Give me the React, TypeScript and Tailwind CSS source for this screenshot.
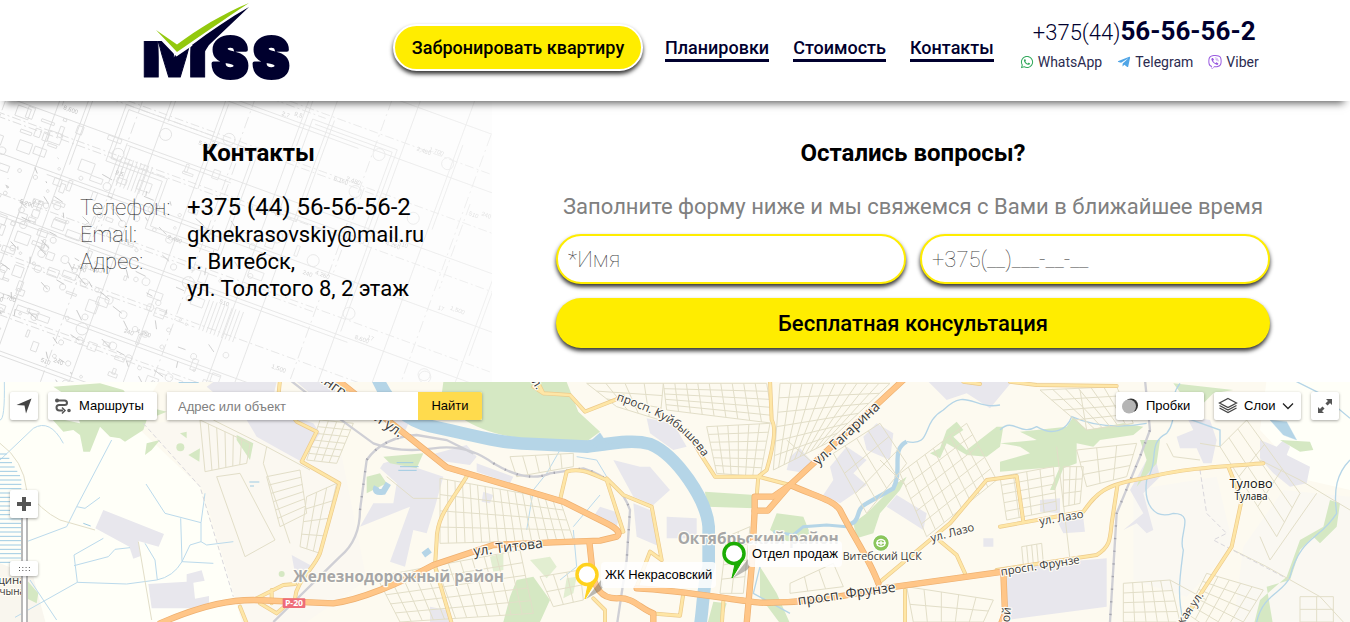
import React from "react";
import { FaWhatsapp, FaTelegramPlane, FaViber } from "react-icons/fa";

type Pt = [number, number];

const lerp = (p: Pt, q: Pt, t: number): Pt => [p[0] + (q[0] - p[0]) * t, p[1] + (q[1] - p[1]) * t];

/* Path of a street grid stretched between four corners. */
function grid(a: Pt, b: Pt, c: Pt, d: Pt, cols: number, rows: number): string {
  const parts: string[] = [];
  for (let i = 0; i <= cols; i++) {
    const p = lerp(a, b, i / cols);
    const q = lerp(d, c, i / cols);
    parts.push(`M${p[0]} ${p[1]}L${q[0]} ${q[1]}`);
  }
  for (let j = 0; j <= rows; j++) {
    const p = lerp(a, d, j / rows);
    const q = lerp(b, c, j / rows);
    parts.push(`M${p[0]} ${p[1]}L${q[0]} ${q[1]}`);
  }
  return parts.join("");
}

const streetGrids: string[] = [
  grid([600, 120], [750, 190], [740, 250], [615, 275], 6, 1),
  grid([650, 290], [720, 280], [825, 480], [735, 530], 1, 1),
  grid([800, 290], [900, 270], [920, 400], [840, 440], 1, 6),
  grid([960, 120], [1060, 130], [1010, 250], [920, 240], 4, 6),
  grid([920, 350], [1010, 310], [960, 520], [900, 500], 3, 4),
  grid([1320, 295], [1680, 360], [1720, 480], [1320, 490], 16, 4),
  grid([1130, 590], [1560, 510], [1600, 700], [1200, 726], 12, 5),
  grid([1620, 590], [1740, 570], [1750, 660], [1660, 680], 3, 2),
  grid([1530, 230], [1720, 220], [1720, 260], [1550, 290], 5, 1),
  grid([1990, 10], [2300, 10], [2320, 130], [2000, 90], 9, 5),
  grid([2120, 140], [2310, 130], [2280, 290], [2150, 280], 6, 6),
  grid([2340, 10], [2670, 10], [2480, 190], [2320, 270], 10, 6),
  grid([2500, 220], [2640, 130], [2720, 250], [2600, 400], 4, 3),
  grid([2700, 280], [2900, 130], [2990, 300], [2780, 470], 8, 5),
  grid([3000, 290], [3160, 260], [3170, 390], [3020, 420], 4, 5),
  grid([3190, 260], [3250, 260], [3240, 370], [3190, 380], 3, 3),
  grid([3230, 210], [3410, 190], [3380, 290], [3260, 320], 3, 3),
  grid([3120, 30], [3350, 20], [3400, 130], [3260, 150], 6, 4),
  grid([3660, 200], [3740, 120], [3900, 340], [3830, 470], 3, 3),
  grid([3370, 610], [3510, 600], [3540, 726], [3370, 726], 5, 4),
  grid([3620, 580], [3790, 630], [3690, 790], [3560, 700], 5, 5),
  grid([2370, 610], [2500, 550], [2530, 620], [2370, 640], 3, 1),
  grid([2720, 620], [2980, 660], [2950, 726], [2740, 726], 5, 2),
  grid([1760, 10], [1990, 10], [1980, 120], [1850, 80], 4, 3),
  grid([2180, 470], [2250, 440], [2230, 640], [2160, 640], 2, 4),
  grid([3900, 650], [4000, 650], [4000, 726], [3900, 726], 2, 2),
  grid([3065, 500], [3125, 490], [3130, 550], [3070, 555], 4, 1),
];

const orangeRoads = [
  "M480 730C620 670 700 660 760 660L1000 670C1080 660 1200 610 1300 555L1480 495L1660 487L1800 482L1850 470C1865 460 1850 445 1820 430L1690 365L1340 262L1150 110L1000 -10",
  "M1768 485L1776 560C1780 620 1800 655 1850 655C1900 650 1925 690 1960 700L1960 740",
  "M1910 625C2040 630 2200 660 2280 668C2400 670 2500 655 2650 625L3010 575L3015 700L3000 740",
  "M2710 0L2370 315L2320 350H2264V390L2255 560L2240 730",
  "M2264 392H2303L2370 315C2450 350 2500 360 2520 390C2560 470 2610 540 2635 610",
];

const yellowRoads = [
  "M840 0L835 50L890 125L950 155L905 245L1018 310L960 520C940 570 890 600 885 655",
  "M760 660L850 615L885 612M720 680L740 730M780 670L830 700L870 665M815 630V670",
  "M1400 290C1350 370 1310 410 1310 480L1305 560L1355 730",
  "M1610 0L1630 40L1710 45L1755 95L1870 50M1600 20L1630 40",
  "M1680 360L1700 275C1750 260 1790 290 1820 300L1870 455H1850M1820 295L1870 345L1955 380L1985 540L1950 515L1910 620",
  "M2310 0L2315 120Q2335 150 2300 270L2275 290L2270 350M2275 290H2145L2100 220L2060 150M2275 290L2370 315",
  "M2635 610L2850 430L2960 300L3050 288L3070 425M2810 475L2870 525L2895 580M3000 440L3250 395C3290 340 3310 315 3430 295C3550 265 3650 260 3790 250",
  "M2990 570L3290 525C3330 500 3330 480 3335 430L3352 318M3685 260L3725 360L3695 500L3590 660L3540 740",
  "M3030 5L3110 15L3350 18M1780 655L1815 690V740M1950 700L2040 707L2050 640M2165 740L2170 665M2715 630V740M2890 5L2940 12",
];

const riverPath = "M1130 -10C1160 60 1210 120 1290 138C1400 160 1500 192 1600 192L1760 200C1850 188 1900 178 1950 192C2030 225 2120 360 2126 440L2126 560C2108 620 2110 680 2100 740";

function Roads({ paths, casing, fill, width }: { paths: string[]; casing: string; fill: string; width: number }) {
  return (
    <g fill="none" strokeLinejoin="round" strokeLinecap="round">
      {paths.map((d) => (
        <path key={"c" + d} d={d} stroke={casing} strokeWidth={width + 4} />
      ))}
      {paths.map((d) => (
        <path key={d} d={d} stroke={fill} strokeWidth={width} />
      ))}
    </g>
  );
}

function MapCanvas() {
  return (
    <svg viewBox="0 6 4050 720" preserveAspectRatio="xMidYMid slice" className="absolute inset-0 h-full w-full" aria-hidden="true">
      <rect width="4050" height="740" fill="#fdfaf0" />
      <path d="M0 0H480L400 130L600 320L705 650L730 740H0Z" fill="#fffff8" />
      <path d="M600 120L1000 100L1100 600L900 740H730L700 640L610 330L430 130Z" fill="#fbf8f1" />
      <path d="M3400 330L3650 290L3700 500L3560 650L3400 600ZM3730 500L3850 330L4050 350V740H3700Z" fill="#faf8f2" />
      <path d="M3800 0H4050V330L3920 300L3780 150Z" fill="#fffff8" />
      <path d="M0 550L100 590L140 740H0Z" fill="#f9f6ee" />

      <g fill="#e8e7ed">
        <path d="M310 390L492 462L476 500L415 483L422 528L400 536L388 500L286 445Z" />
        <path d="M445 612L560 605V583L605 571L614 602L580 608L585 656L627 648V668L585 685H455Z" />
        <path d="M640 6H830L810 90L940 130L960 160L905 245L845 212L770 170L740 120L620 20ZM875 525L940 560L885 580Z" />
        <path d="M890 6H1010L1000 60L930 40ZM1160 120L1230 120L1210 165Z" />
        <path d="M1290 225L1400 195L1430 230L1410 255L1340 245ZM1430 250L1540 290L1530 310L1430 275ZM1150 250L1180 240L1330 290L1305 380L1280 460L1240 450L1215 560L1170 545L1230 380L1080 440L1120 370H1180L1190 310L1140 265Z" />
        <path d="M1840 240L1920 260L1950 260L2010 330L1960 375L1900 350ZM1900 370L1950 390L1980 500L1910 470ZM1800 380L1860 400L1850 440L1780 410ZM1290 680L1340 690L1350 740H1290ZM1450 335L1480 345L1470 370L1445 365Z" />
        <path d="M1940 115L2020 130L2060 200L2020 210L1950 160ZM2000 410L2090 415V475H2000Z" />
        <path d="M2490 260L2540 200L2600 240L2560 280L2600 315L2520 370L2470 345L2500 300ZM2590 170L2630 130L2680 160L2670 240L2600 210ZM2370 230L2400 205L2440 250L2420 280L2360 270ZM2690 345L2780 400L2770 450L2660 380Z" />
        <path d="M2780 0H3040L2970 85L2900 40L2840 60ZM2950 475H2980V500H2950ZM3120 360L3180 355V400L3120 395ZM3170 420L3250 415L3255 455L3190 460ZM3020 560L3320 535V680L3020 720ZM3390 330L3440 240L3470 250L3480 290L3430 340L3460 450L3440 460L3410 430L3370 450L3430 400Z" />
        <path d="M3530 170L3580 150L3560 110L3630 120L3650 180L3635 250H3610L3590 205H3540ZM3780 180L3830 200L3850 180L3870 200L3860 225L3930 260L3920 310L3870 320L3820 280L3780 235Z" />
      </g>

      <g fill="#d5e8c3">
        <path d="M1330 6H1700L1735 95L1800 155L1755 188L1600 178C1500 170 1440 150 1380 112L1320 80Z" />
        <path d="M2115 335L2265 345V385L2120 380ZM2330 400L2410 410L2430 460L2370 490L2310 450ZM1550 600L1600 590L1650 660L1620 726H1510L1530 650ZM2280 560L2330 640L2370 730H2340L2280 650ZM2140 665L2180 670L2160 740H2120Z" />
        <path d="M2560 430L2600 400L2690 310L2720 290L2700 330L2640 400L2620 460L2570 475ZM2790 220L2820 205L2840 150L2870 125L2890 150L2860 170L2900 210L2990 140L3010 140L3000 200L2960 230L2900 225L2840 190L2820 235Z" />
        <path d="M3000 190L3110 180L3060 155L3200 140L3220 110L3260 150L3370 130L3430 140L3400 165L3300 180L3280 200L3230 190L3230 250L3190 265L3165 330H3150L3180 260L3000 275V245L3090 220L3060 200Z" />
        <path d="M3420 180L3480 180L3470 250L3410 320L3440 240ZM3520 10L3700 30L3640 40L3570 110L3550 50ZM3840 180L3930 185L3940 210L3900 215ZM3990 360L4020 370L4010 440L3960 490L3940 470L3900 510L3870 600L3800 620L3820 740H3760L3780 660L3860 590L3900 480L3970 440Z" />
        <path d="M160 20L300 10L370 30L400 70L500 95L440 120L430 150L375 185L360 175L330 170L300 140L270 215H250L240 165L220 150L190 155L150 110L240 130L220 60ZM435 225L440 190L480 180L455 210ZM540 160L560 155L560 175ZM565 225L600 205L598 245ZM710 165L760 190L750 240L710 180ZM80 600L115 640L110 670L70 650ZM1150 230L1270 220L1250 265L1170 250ZM1100 290L1140 280L1160 310L1100 340Z" />
        <path d="M1700 595L1730 590L1720 640L1690 655ZM1470 530L1510 520V570L1480 575ZM1590 540L1650 530L1670 560L1640 595Z" opacity=".7" />
        <circle cx="541" cy="202" r="12" />
        <circle cx="845" cy="582" r="9" />
      </g>

      <g fill="none" stroke="#b5d5e7">
        <path d={riverPath} strokeWidth="38" />
        <path d="M1770 185L1800 158L1820 188L1900 195L1800 212Z" fill="#b5d5e7" strokeWidth="1" />
        <path d="M2540 435C2590 425 2560 390 2600 370L2680 325C2710 270 2670 210 2720 185" strokeWidth="13" />
        <path d="M2320 455L2380 465L2410 440L2480 435L2540 440" strokeWidth="9" />
        <path d="M2720 185C2800 200 2760 130 2830 90C2900 20 2920 90 3000 75M3000 150C3040 110 3060 170 3110 140C3160 170 3200 150 3215 110C3260 130 3330 150 3440 130M2280 560L2260 640L2370 700" strokeWidth="4" />
        <path d="M3540 10C3500 60 3540 110 3500 160C3440 190 3480 240 3440 300C3430 370 3460 420 3520 400C3590 400 3530 470 3550 510C3540 590 3530 640 3550 726M4050 240C4010 280 4000 330 4010 400C3960 480 3900 470 3870 590C3850 640 3790 640 3770 726M3880 0L3960 40L4050 115M3520 100L3660 150V200" strokeWidth="4" />
        <path d="M3810 120L3860 125L3890 180L3850 165Z" fill="#b5d5e7" />
        <path d="M1130 320Q1120 340 1150 335L1165 310M1270 525L1290 510" strokeWidth="18" />
      </g>
      <g fill="none" stroke="#bbdaec" strokeWidth="3">
        <path d="M0 240L100 145Q150 115 190 190M335 180L230 380L200 440L80 485M230 380L255 385L300 352M438 312L495 400L603 428L615 340M603 428V485L620 495L700 485M542 415L546 545L640 550M546 545Q520 590 470 600L380 612L232 607L222 525L310 475M232 607L45 712M222 557L325 530L345 508L390 503M435 490L465 540L472 600M90 600L170 720M546 545L570 495L603 485M0 120Q15 120 13 6M1680 210L1640 280L1600 330L1580 450M1800 345L1720 440M1720 450L1730 560L1680 600M1730 230L1790 240L1820 290" />
      </g>
      <g stroke="#9ecbe3" strokeWidth="3">
        {Array.from({ length: 26 }, (_, i) => (
          <path key={i} d={`M0 ${222 + i * 13}H${i < 6 ? 20 + i * 8 : 64}`} />
        ))}
        <path d="M1190 248H1240M1200 260H1256M1195 271H1250M250 430L272 438M748 306H778M750 318H762M536 7H596" />
      </g>

      <g fill="none" stroke="#e2dec8" strokeWidth="3">
        {streetGrids.map((d) => (
          <path key={d} d={d} />
        ))}
        <path d="M0 190Q70 240 80 330Q120 390 180 420L285 450M415 485L455 720M1160 290L1240 355L1320 355M640 120L800 200L930 270M800 200L790 250L870 490M3780 240L3900 300L4050 390M3700 510L3800 560L3960 650L4030 726M3510 600L3620 660M2640 240L2720 320M2360 180L2440 250M3240 30L3260 150M3170 200L3210 540M3600 190L3660 200M3500 190L3520 230L3600 240M3780 470L3810 540L3950 340" />
      </g>
      <g fill="none" stroke="#d9d7dc" strokeWidth="3" strokeDasharray="14 8">
        <path d="M430 130L600 320L700 650M3600 270L3620 400L3680 460L3640 480L3850 590" />
      </g>
      <g fill="none" stroke="#cfcfd5" strokeWidth="7">
        <path d="M870 0L1010 110L1120 190Q1200 220 1300 205Q1400 190 1480 250Q1580 310 1650 280L1750 265Q1860 300 1890 390L1880 540L1850 740M1020 530Q1080 480 1080 390L1100 240Q1150 170 1250 165L1340 180L1420 220M1020 530L820 726M3435 0L3450 150L3420 230L3350 400L3330 726" />
      </g>
      <g fill="none" stroke="#a5a5ae" strokeWidth="7" strokeDasharray="4 34">
        <path d="M1080 390L1100 240Q1150 170 1250 165M1480 250Q1580 310 1650 280L1750 265Q1860 300 1890 390L1880 540M3435 0L3450 150L3420 230L3350 400L3330 726" />
      </g>

      <Roads paths={yellowRoads} casing="#ecca8b" fill="#fee6a6" width={8} />
      <Roads paths={orangeRoads} casing="#eeb070" fill="#ffc688" width={15} />

      <defs>
        <path id="street-kuibysheva" d="M1848 60C1960 100 2040 130 2110 232" />
        <path id="street-long" d="M880 -52L1240 204" />
      </defs>
      <g fontFamily="'Open Sans', 'Noto Sans', sans-serif" fill="#3a3a3a" stroke="#fffdf5" strokeWidth="7" strokeLinejoin="round" paintOrder="stroke">
        <g fontWeight="700" fill="#a6a6a6" fontSize="46">
          <text x="880" y="606">Железнодорожный район</text>
          <text x="2033" y="492">Октябрьский район</text>
        </g>
        <text fontSize="42" transform="translate(1422 528) rotate(-7)">ул. Титова</text>
        <text fontSize="35"><textPath href="#street-kuibysheva">просп. Куйбышева</textPath></text>
        <text fontSize="42" transform="translate(2455 258) rotate(-43)">ул. Гагарина</text>
        <text fontSize="42" transform="translate(2395 676) rotate(-8)">просп. Фрунзе</text>
        <text fontSize="34" transform="translate(2795 486) rotate(-15)">ул. Лазо</text>
        <text fontSize="34" transform="translate(3120 436) rotate(-10)">ул. Лазо</text>
        <text fontSize="34" transform="translate(3004 587) rotate(-9)">просп. Фрунзе</text>
        <text fontSize="34" transform="translate(3540 748) rotate(-55)">ская ул.</text>
        <text fontSize="36" transform="translate(3026 746) rotate(-83)">кой</text>
        <text fontSize="43"><textPath href="#street-long">Ленинградская ул.</textPath></text>
        <text fontSize="36" transform="translate(1585 -10) rotate(58)">ул.</text>
        <text fontSize="32" x="2528" y="540">Витебский ЦСК</text>
        <g fill="#111" textAnchor="middle">
          <text fontSize="38" x="3753" y="325">Тулово</text>
          <text fontSize="30" x="3753" y="361">Тулава</text>
        </g>
        <text fontSize="34" x="-16" y="612">щина</text>
        <text fontSize="30" x="-16" y="646">счына</text>
      </g>
      <rect x="848" y="655" width="68" height="29" rx="3" fill="#ee6c79" />
      <text x="882" y="679" fontSize="26" fontWeight="700" textAnchor="middle" fill="#fff" fontFamily="'Open Sans', sans-serif">Р-20</text>
      <circle cx="2643" cy="489" r="25" fill="#8bc65c" stroke="#fff" strokeWidth="4" />
      <path d="M2632 483Q2643 474 2654 483V495Q2643 504 2632 495Z" fill="none" stroke="#fff" strokeWidth="4" />
      <path d="M2628 489H2658M2643 482V496" stroke="#fff" strokeWidth="4" />
    </svg>
  );
}

/* Repeatable scatter value in 0..1 for the small details of the plan. */
const scatter = (n: number) => {
  const s = Math.sin(n * 127.1 + 11.7) * 43758.5453;
  return s - Math.floor(s);
};

/* Faint architect's drawing behind the contact details. */
function Blueprint() {
  const marks = ["2,480", "510", "1,500", "2,7", "6.160", "4.260", "17", "5.200", "1.700", "240", "8,600", "9,5"];
  return (
    <svg viewBox="0 0 492 281" preserveAspectRatio="xMinYMin slice" className="absolute inset-y-0 left-0 h-full w-[492px]" aria-hidden="true">
      <defs>
        <linearGradient id="fade">
          <stop offset="0" stopColor="#fff" />
          <stop offset="1" stopColor="#fff" stopOpacity=".4" />
        </linearGradient>
        <mask id="fade-mask"><rect width="492" height="281" fill="url(#fade)" /></mask>
      </defs>
      <rect width="492" height="281" fill="#fdfdfd" />
      <g mask="url(#fade-mask)">
        <g transform="rotate(20)" fill="none" stroke="#d9d9d9" strokeWidth=".8">
          {Array.from({ length: 15 }, (_, i) => {
            const y = -175 + i * 31 + (i % 3) * 7;
            return <path key={i} d={`M0 ${y}H560M${(i * 67) % 200} ${y + 4}H${230 + ((i * 41) % 190)}`} strokeDasharray={i % 2 === 0 ? "9 3 2 3" : undefined} />;
          })}
          {Array.from({ length: 14 }, (_, i) => {
            const x = 5 + i * 39 + (i % 2) * 12;
            return <path key={i} d={`M${x} -180V280M${x + 4} ${-160 + ((i * 53) % 180)}v90`} strokeDasharray={i % 3 === 0 ? "12 4 2 4" : undefined} />;
          })}
          {Array.from({ length: 130 }, (_, i) => (
            <rect key={i} x={scatter(i) * scatter(i + 900) * 420} y={scatter(i + 200) * 260 - 10} width={2 + scatter(i + 400) * 13} height={2 + scatter(i + 600) * 10} />
          ))}
          {Array.from({ length: 110 }, (_, i) => (
            <circle key={i} cx={scatter(i + 50) * 300} cy={40 + scatter(i + 250) * 210} r={1 + scatter(i + 450) * 3} />
          ))}
          {Array.from({ length: 90 }, (_, i) => (
            <path key={i} d={`M${scatter(i + 70) * 280} ${30 + scatter(i + 270) * 220}l${scatter(i + 470) * 12} ${scatter(i + 670) * 8}`} stroke="#bdbdbd" />
          ))}
          {Array.from({ length: 16 }, (_, i) => (
            <circle key={i} cx={scatter(i + 5) * 500} cy={scatter(i + 25) * 330 - 140} r="6" />
          ))}
          {Array.from({ length: 10 }, (_, i) => (
            <path key={i} d={`M${130 + i * 4} 10v30M${265 + i * 4} 115v32`} />
          ))}
          <path d="M120 -40H260V70H180V20H120ZM124 -36H256V66H184V16H124ZM300 -90H390V10H300ZM304 -86H386V6H304" />
          <g fill="#bdbdbd" stroke="none" fontSize="6" fontFamily="'Liberation Sans', sans-serif">
            {Array.from({ length: 50 }, (_, i) => (
              <text key={i} x={(i * 71) % 500} y={((i * 43) % 400) - 160}>{marks[i % marks.length]}</text>
            ))}
          </g>
        </g>
      </g>
    </svg>
  );
}

function Logo() {
  return (
    <svg viewBox="0 0 156 80" className="h-20 w-[156px] shrink-0" role="img" aria-label="MSS">
      <defs>
        <clipPath id="logo-band"><rect y="41" width="156" height="39" /></clipPath>
      </defs>
      <g fill="#00002e" stroke="#00002e" strokeLinejoin="round" fontFamily="Inter, 'Liberation Sans', sans-serif" fontWeight="900">
        <text x="-1" y="77" fontSize="70" strokeWidth="1" clipPath="url(#logo-band)">M</text>
        <g fontSize="54" strokeWidth="4">
          <text x="70" y="77">S</text>
          <text x="111" y="77">S</text>
        </g>
      </g>
      <path d="M14 30L35 44.500C56 29 80 14 107 3C84 18 58 36 35 52Z" fill="#93c90e" stroke="#fff" strokeWidth="7" paintOrder="stroke" />
      <path d="M50 45C68 31 88 18 107 7L67 45L60 56Z" fill="#00002e" />
    </svg>
  );
}

function Pin({ color }: { color: string }) {
  return (
    <svg viewBox="0 0 30 38" className="h-[38px] w-[30px] shrink-0" aria-hidden="true">
      <path d="M11 37L26 18Q31 23 25 29Z" fill="#555" opacity=".4" />
      <path d="M22 17L10 37L13 23Z" fill={color} stroke={color} strokeWidth="1" />
      <circle cx="12" cy="12.500" r="10" fill="#fff" stroke={color} strokeWidth="3.500" />
    </svg>
  );
}

const tool = "flex h-7 items-center rounded-xs bg-white text-[13px] text-black shadow-[0_1px_3px_rgba(0,0,0,0.35)]";

const links = ["Планировки", "Стоимость", "Контакты"];

const raised = "shadow-[0_3px_4px_#333]";

const field = "h-[50px] min-w-0 flex-1 rounded-full border-2 border-[#ffed00] bg-white px-2.5 text-[22px] font-thin placeholder:text-[#444]";

export default function App() {
  return (
    <div className="flex min-h-screen flex-col bg-white font-[Roboto,'Noto_Sans',sans-serif] text-black">
      <header className="relative z-10 h-[101px] bg-white px-4 text-[#00002e] shadow-[0_8px_8px_-6px_rgba(0,0,0,0.65)]">
        <div className="flex items-start pl-[126px]">
          <a href="#" className="shrink-0"><Logo /></a>
          <button type="button" className={`mt-6 ml-[95px] h-[47px] w-[250px] shrink-0 rounded-full border-2 border-white bg-[#ffed00] text-[18px] font-medium text-black ${raised}`}>
            Забронировать квартиру
          </button>
          <nav className="mt-9 ml-[22px] flex shrink-0 gap-6">
            {links.map((l) => (
              <a key={l} href="#" className="border-b-3 border-[#00002e] text-[18px] leading-[23px] font-medium">{l}</a>
            ))}
          </nav>
          <div className="mt-4 ml-[26px] flex shrink-0 flex-col items-center">
            <a href="tel:+375445656562" className="pl-2.5 text-[22px] leading-[30px] font-light">
              +375(44)<b className="text-[26px] font-bold">56-56-56-2</b>
            </a>
            <div className="mt-1 flex gap-[15px] text-[14px] leading-5 text-[#2b2b50]">
              <a href="#" className="flex items-center gap-1"><FaWhatsapp className="text-[#32a95c]" />WhatsApp</a>
              <a href="#" className="flex items-center gap-1"><FaTelegramPlane className="text-[#50a5e6]" />Telegram</a>
              <a href="#" className="flex items-center gap-1"><FaViber className="text-[#9a5be0]" />Viber</a>
            </div>
          </div>
        </div>
      </header>

      <section className="relative">
        <Blueprint />
        <div className="relative flex justify-between px-20 pt-9 pb-[34px]">
          <div className="w-[30%]">
            <h2 className="text-center text-[24px] leading-8 font-bold">Контакты</h2>
            <table className="mt-[25px] text-[22px] leading-[27px] whitespace-nowrap">
              <tbody>
                <tr><th className="w-[107px] text-left font-thin text-[#222]">Телефон:</th><td className="text-[24px] leading-[27px]">+375 (44) 56-56-56-2</td></tr>
                <tr><th className="text-left font-thin text-[#222]">Email:</th><td>gknekrasovskiy@mail.ru</td></tr>
                <tr><th className="text-left align-top font-thin text-[#222]">Адрес:</th><td>г. Витебск,<br />ул. Толстого 8, 2 этаж</td></tr>
              </tbody>
            </table>
          </div>
          <form className="w-[60%]" onSubmit={(e) => e.preventDefault()}>
            <h2 className="text-center text-[24px] leading-8 font-bold">Остались вопросы?</h2>
            <p className="mt-5 text-center text-[22px] leading-9 whitespace-nowrap text-[#808080]">
              Заполните форму ниже и мы свяжемся с Вами в ближайшее время
            </p>
            <div className="mt-[9px] flex gap-3.5">
              <input aria-label="Имя" placeholder="*Имя" className={`${field} ${raised}`} />
              <input aria-label="Телефон" type="tel" placeholder="+375(__)___-__-__" className={`${field} ${raised}`} />
            </div>
            <button type="submit" className={`mt-3.5 h-[50px] w-full rounded-full bg-[#ffed00] text-[22px] font-medium ${raised}`}>
              Бесплатная консультация
            </button>
          </form>
        </div>
      </section>

      <section aria-label="Карта" className="relative min-h-60 flex-1 overflow-hidden font-['Liberation_Sans',Arial,sans-serif]">
        <MapCanvas />

        <div className="absolute top-2.5 left-2.5 flex gap-2.5">
          <button type="button" aria-label="Моё местоположение" className={`${tool} w-7 justify-center`}>
            <svg viewBox="0 0 16 16" className="size-4"><path d="M.5 7L15.500 .5L10 15.500L8.500 7.500Z" fill="#444" /></svg>
          </button>
          <button type="button" className={`${tool} w-[109px] gap-2 pl-[7px]`}>
            <svg viewBox="0 0 16 16" className="size-4 shrink-0" fill="none" stroke="#555" strokeWidth="2">
              <path d="M3 2.500H9.500Q12 2.500 12 5Q12 7 9.500 7H4Q1.500 7 1.500 9.500Q1.500 12.500 4.500 12.500H8" />
              <path d="M7 9.500L10 12.500L7 15.500" strokeWidth="1.500" />
              <circle cx="2" cy="2.500" r="1" /><circle cx="14" cy="12.500" r=".8" />
            </svg>
            Маршруты
          </button>
          <form className="flex shadow-[0_1px_3px_rgba(0,0,0,0.35)]" onSubmit={(e) => e.preventDefault()}>
            <input aria-label="Адрес или объект" placeholder="Адрес или объект" className="h-7 w-[251px] bg-white px-[11px] text-[13px] placeholder:text-[#808080]" />
            <button type="submit" className="h-7 w-16 rounded-r-xs bg-[#ffdb4d] text-[13px]">Найти</button>
          </form>
        </div>

        <div className="absolute top-2.5 right-[11px] flex gap-2.5">
          <button type="button" className={`${tool} w-[88px] gap-2 pl-1.5`}>
            <svg viewBox="0 0 16 16" className="size-4 shrink-0"><circle cx="9" cy="7.500" r="7" fill="#333" /><circle cx="7" cy="8.500" r="7" fill="#b5b5b5" /></svg>
            Пробки
          </button>
          <button type="button" className={`${tool} w-[87px] gap-1.5 pl-1`}>
            <svg viewBox="0 0 20 18" className="h-[18px] w-5 shrink-0" fill="none" stroke="#444" strokeWidth="1.300">
              <path d="M10 1.500L18.500 6L10 10.500L1.500 6ZM1.500 8.500L10 13L18.500 8.500M1.500 11L10 15.500L18.500 11" />
            </svg>
            Слои
            <svg viewBox="0 0 12 8" className="h-2 w-3" fill="none" stroke="#222" strokeWidth="1.300"><path d="M1 1.500L6 6.500L11 1.500" /></svg>
          </button>
          <button type="button" aria-label="Во весь экран" className={`${tool} w-7 justify-center`}>
            <svg viewBox="0 0 16 16" className="size-4" fill="#555" stroke="#555">
              <path d="M9 1H15V7ZM1 9V15H7Z" stroke="none" /><path d="M9.500 6.500L13 3M6.500 9.500L3 13" strokeWidth="3" />
            </svg>
          </button>
        </div>

        <div className="absolute top-[108px] bottom-0 left-2.5 flex w-7 flex-col items-center">
          <button type="button" aria-label="Приблизить" className={`${tool} z-10 w-7 shrink-0 justify-center`}>
            <svg viewBox="0 0 14 14" className="size-3.5"><path d="M7 0V14M0 7H14" stroke="#555" strokeWidth="4" /></svg>
          </button>
          <div className="w-[7px] flex-1 border-x-2 border-[#b9b9b9] bg-white" />
          <button type="button" aria-label="Масштаб" className="absolute top-[71px] flex h-[15px] w-7 items-center justify-center rounded-xs bg-white shadow-[0_1px_3px_rgba(0,0,0,0.35)]">
            <svg viewBox="0 0 11 4" className="h-1 w-[11px]"><path d="M0 .5H11M0 3.500H11" stroke="#555" strokeDasharray="1 2.300" /></svg>
          </button>
        </div>

        <a href="#" className="absolute top-[180px] left-[575px] flex items-start text-[13px] leading-[26px] whitespace-nowrap">
          <Pin color="#ffd21e" />
          <span className="-ml-1 rounded-sm bg-white/85 px-1">ЖК Некрасовский</span>
        </a>
        <a href="#" className="absolute top-[159px] left-[722px] flex items-start text-[13px] leading-[26px] whitespace-nowrap">
          <Pin color="#1bad03" />
          <span className="-ml-1 rounded-sm bg-white/85 px-1">Отдел продаж</span>
        </a>
      </section>
    </div>
  );
}
